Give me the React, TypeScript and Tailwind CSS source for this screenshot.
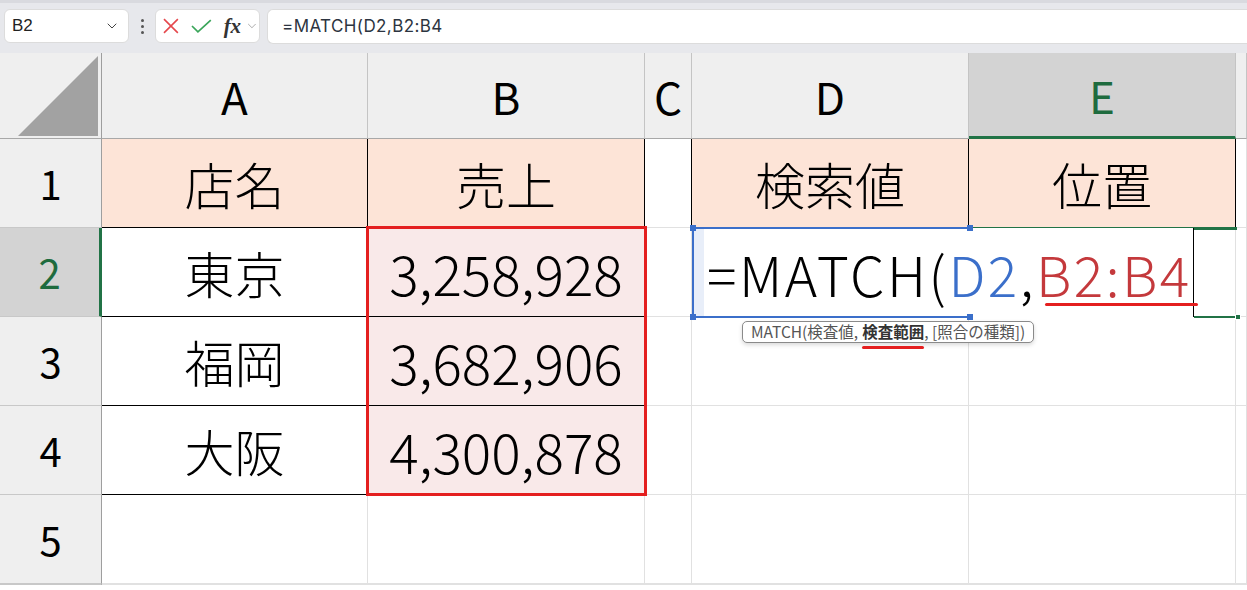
import { ChevronDown } from 'lucide-react'

const font = "font-['Noto_Sans_CJK_JP',sans-serif]"

const cols = ['A', 'B', 'C', 'D', 'E', '']

type Cell = { text?: string; fill?: string; border?: string; num?: boolean }

const peach = 'bg-[#fde4d7]'
const pink = 'bg-[#f9e9e9]'
const boxed = 'border-r-black border-b-black'

// rows 1..5 (plus a sliver of row 6)
const rows: Cell[][] = [
  [
    { text: '店名', fill: peach, border: boxed },
    { text: '売上', fill: peach, border: boxed },
    { border: 'border-r-black border-b-[#e1e1e1]' },
    { text: '検索値', fill: peach, border: boxed },
    { text: '位置', fill: peach, border: boxed },
    {},
  ],
  [
    { text: '東京', border: boxed },
    { text: '3,258,928', fill: pink, border: boxed, num: true },
    {},
    {},
    {},
    {},
  ],
  [
    { text: '福岡', border: boxed },
    { text: '3,682,906', fill: pink, border: boxed, num: true },
    {},
    {},
    {},
    {},
  ],
  [
    { text: '大阪', border: boxed },
    { text: '4,300,878', fill: pink, border: boxed, num: true },
    {},
    {},
    {},
    {},
  ],
  [{}, {}, {}, {}, {}, {}],
  [{}, {}, {}, {}, {}, {}],
]

const Toolbar = () => (
  <div className="h-[53px] bg-[#e7e8ec] border-t-[3px] border-[#d9dadf] flex items-start pt-[6px] pl-[4px] gap-[7px]">
    <div className="w-[125px] h-[34px] bg-white rounded-[6px] border border-[#dcdcdc] flex items-center justify-between pl-[7px] pr-[8px]">
      <span className="text-[17px] text-[#222] font-['Liberation_Sans',sans-serif]">B2</span>
      <ChevronDown className="w-4 h-4 text-[#444]" strokeWidth={1.5} />
    </div>
    <div className="h-[34px] w-[12px] flex flex-col items-center justify-center gap-[3px]">
      <span className="w-[3px] h-[3px] bg-[#555] rounded-full" />
      <span className="w-[3px] h-[3px] bg-[#555] rounded-full" />
      <span className="w-[3px] h-[3px] bg-[#555] rounded-full" />
    </div>
    <div className="w-[105px] h-[34px] bg-white rounded-[6px] border border-[#dcdcdc] flex items-center pl-[7px]">
      <svg width="16" height="16" viewBox="0 0 16 16">
        <path d="M1 1 L15 15 M15 1 L1 15" stroke="#e5484d" strokeWidth="1.6" />
      </svg>
      <svg width="22" height="16" viewBox="0 0 22 16" className="ml-[12px]">
        <path d="M1 8 L7 14 L20 2" stroke="#3aa55a" strokeWidth="1.7" fill="none" />
      </svg>
      <span className="ml-[11px] italic font-bold text-[21px] leading-none text-[#333] font-['Liberation_Serif',serif]">
        fx
      </span>
      <ChevronDown className="w-[14px] h-[14px] text-[#a0a0a0] ml-[4px]" strokeWidth={1.5} />
    </div>
    <div className="flex-1 h-[35px] bg-white rounded-l-[6px] border border-r-0 border-[#dcdcdc] flex items-center pl-[14px]">
      <span className="text-[17px] text-[#2c3440] font-['Inter',sans-serif] tracking-[0.4px]">
        =MATCH(D2,B2:B4
      </span>
    </div>
  </div>
)

const Sheet = () => (
  <div
    className={`grid grid-cols-[102px_266px_277px_47px_277px_267px_1fr] grid-rows-[86px_89px_89px_89px_89px_89px] ${font}`}
  >
    {/* corner */}
    <div className="bg-[#efefef] border-r border-b border-r-[#9e9e9e] border-b-[#a8a8a8] flex items-end justify-end pr-[3px] pb-[2px]">
      <svg width="80" height="80" viewBox="0 0 80 80">
        <polygon points="0,80 80,0 80,80" fill="#a2a2a2" />
      </svg>
    </div>
    {cols.map((c) => {
      const sel = c === 'E'
      return (
        <div
          key={c || 'f'}
          className={`flex items-center justify-center text-[44px] leading-none border-r border-r-[#c4c4c4] ${
            sel
              ? 'bg-[#d3d3d3] text-[#1e6b3e] border-b-[3px] border-b-[#217346]'
              : 'bg-[#efefef] text-black border-b border-b-[#a8a8a8]'
          }`}
        >
          {c}
        </div>
      )
    })}
    {rows.map((r, i) => (
      <div key={i} className="contents">
        <div
          className={`flex items-center justify-center text-[40px] leading-none border-b border-b-[#c8c8c8] ${
            i === 1
              ? 'bg-[#d3d3d3] text-[#1e6b3e] border-r-[3px] border-r-[#217346]'
              : 'bg-[#efefef] text-black border-r border-r-[#9e9e9e]'
          }`}
        >
          {i < 5 ? i + 1 : ''}
        </div>
        {r.map((cell, j) => (
          <div
            key={j}
            className={`flex items-center justify-center leading-none font-light text-black border-r border-b ${
              cell.num ? 'text-[55px]' : 'text-[50px]'
            } ${cell.fill ?? 'bg-white'} ${cell.border ?? 'border-r-[#e1e1e1] border-b-[#e1e1e1]'}`}
          >
            {cell.text}
          </div>
        ))}
      </div>
    ))}
  </div>
)

export default function App() {
  return (
    <div className="relative w-[1247px] h-[590px] overflow-hidden bg-white">
      <Toolbar />
      <Sheet />

      {/* referenced range B2:B4 */}
      <div className="absolute left-[366px] top-[226px] w-[281px] h-[270px] border-[3px] border-[#e41f1f]" />

      {/* active cell outline (E2) */}
      <div className="absolute left-[969px] top-[227px] w-[268px] h-[3px] bg-[#217346]" />
      <div className="absolute left-[969px] top-[316px] w-[268px] h-[2px] bg-[#217346]" />
      <div className="absolute left-[1235px] top-[314px] w-[6px] h-[6px] bg-[#217346] border border-white" />

      {/* in-cell editor */}
      <div className={`absolute left-[692px] top-[228px] w-[502px] h-[90px] bg-white flex items-center ${font}`}>
        <div className="w-[12px] h-full bg-[#e8eef9]" />
        <span className="pl-[3px] text-[55px] tracking-[2.5px] font-light leading-none whitespace-nowrap text-black">
          =MATCH(<span className="text-[#3b6fca]">D2</span>,<span className="text-[#c4393c]">B2:B4</span>
        </span>
      </div>
      <div className="absolute left-[1193px] top-[228px] w-px h-[89px] bg-black" />
      <div className="absolute left-[692px] top-[227px] w-[278px] h-[2px] bg-[#3b6fca]" />
      <div className="absolute left-[692px] top-[316px] w-[278px] h-[2px] bg-[#3b6fca]" />
      <div className="absolute left-[692px] top-[227px] w-[2px] h-[91px] bg-[#3b6fca]" />
      <div className="absolute left-[690px] top-[225px] w-[6px] h-[6px] bg-[#3b6fca]" />
      <div className="absolute left-[967px] top-[225px] w-[6px] h-[6px] bg-[#3b6fca]" />
      <div className="absolute left-[690px] top-[314px] w-[6px] h-[6px] bg-[#3b6fca]" />
      <div className="absolute left-[967px] top-[314px] w-[6px] h-[6px] bg-[#3b6fca]" />

      {/* red annotation underline */}
      <div className="absolute left-[1045px] top-[303px] w-[153px] h-[3px] bg-[#e41f1f] rounded-full" />

      {/* function tooltip */}
      <div
        className={`absolute left-[742px] top-[321px] h-[22px] px-[8px] bg-white border border-[#8a8a8a] rounded-[5px] shadow-[0_2px_4px_rgba(0,0,0,0.15)] flex items-center text-[15.5px] text-[#555] whitespace-nowrap ${font}`}
      >
        MATCH(検査値, <span className="relative font-bold text-[#333] ml-[4px]">検査範囲<span className="absolute left-0 right-0 -bottom-[5px] h-[3px] bg-[#e41f1f] rounded-full" /></span>, [照合の種類])
      </div>
    </div>
  )
}
